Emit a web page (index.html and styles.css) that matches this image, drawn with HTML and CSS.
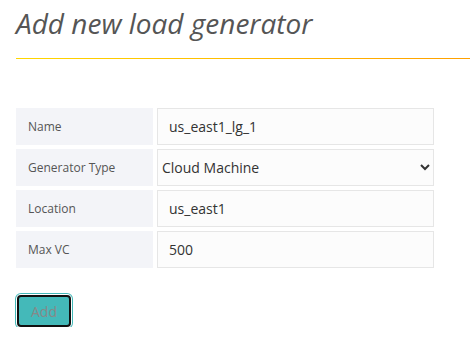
FILE: index.html
```html
<!DOCTYPE html>
<html lang="en">
<head>
    <meta charset="UTF-8">
    <meta name="viewport" content="width=device-width, initial-scale=1.0">
    <title>Add new load generator</title>
    <link rel="stylesheet" href="styles.css">
</head>
<body>
    <h1 class="pageTitle">Add new load generator</h1>
    <div class="titleRule"></div>

    <form class="genForm">
        <div class="formGrid">
            <label class="fieldLabel" for="lgName">Name</label>
            <input id="lgName" class="fieldInput" type="text" value="us_east1_lg_1">

            <label class="fieldLabel" for="lgType">Generator Type</label>
            <select id="lgType" class="fieldSelect">
                <option selected>Cloud Machine</option>
                <option>On Premise</option>
            </select>

            <label class="fieldLabel" for="lgLocation">Location</label>
            <input id="lgLocation" class="fieldInput" type="text" value="us_east1">

            <label class="fieldLabel" for="lgMaxVc">Max VC</label>
            <input id="lgMaxVc" class="fieldInput" type="text" value="500">
        </div>

        <button type="button" class="addButton">Add</button>
    </form>
</body>
</html>
```

FILE: styles.css
```css
body {
    font-family: 'Open Sans', sans-serif;
    background-color: #fff;
    color: #555;
    margin: 0;
    padding: 0 0 0 16px;
}

.pageTitle {
    font-size: 28px;
    font-style: italic;
    font-weight: 400;
    color: #555;
    margin: 0;
    padding-top: 4px;
    line-height: 38px;
}

.titleRule {
    height: 1px;
    margin-top: 16px;
    background: linear-gradient(to right, #ffd700, #ffa000);
}

.genForm {
    margin-top: 49px;
}

.formGrid {
    display: grid;
    grid-template-columns: 137px 277px;
    grid-auto-rows: 37px;
    gap: 4px;
}

.fieldLabel {
    background-color: #f3f4f8;
    font-size: 12px;
    color: #555;
    display: flex;
    align-items: center;
    padding-left: 12px;
}

.fieldInput,
.fieldSelect {
    font-family: 'Open Sans', sans-serif;
    font-size: 14px;
    color: #333;
    background-color: #fcfcfc;
    border: 1px solid #e6e6e6;
    margin: 0;
    height: 37px;
    box-sizing: border-box;
}

.fieldInput {
    padding: 0 11px;
}

.fieldSelect {
    padding: 0;
}

.addButton {
    margin-top: 27px;
    margin-left: 1px;
    width: 54px;
    height: 32px;
    font-family: 'Open Sans', sans-serif;
    font-size: 14px;
    color: #888;
    background-color: #44b9b9;
    border: 2px solid #111;
    border-radius: 4px;
    box-shadow: 0 0 0 1px #fff, 0 0 0 2px #44b9b9;
    padding: 0;
    cursor: pointer;
}
```
